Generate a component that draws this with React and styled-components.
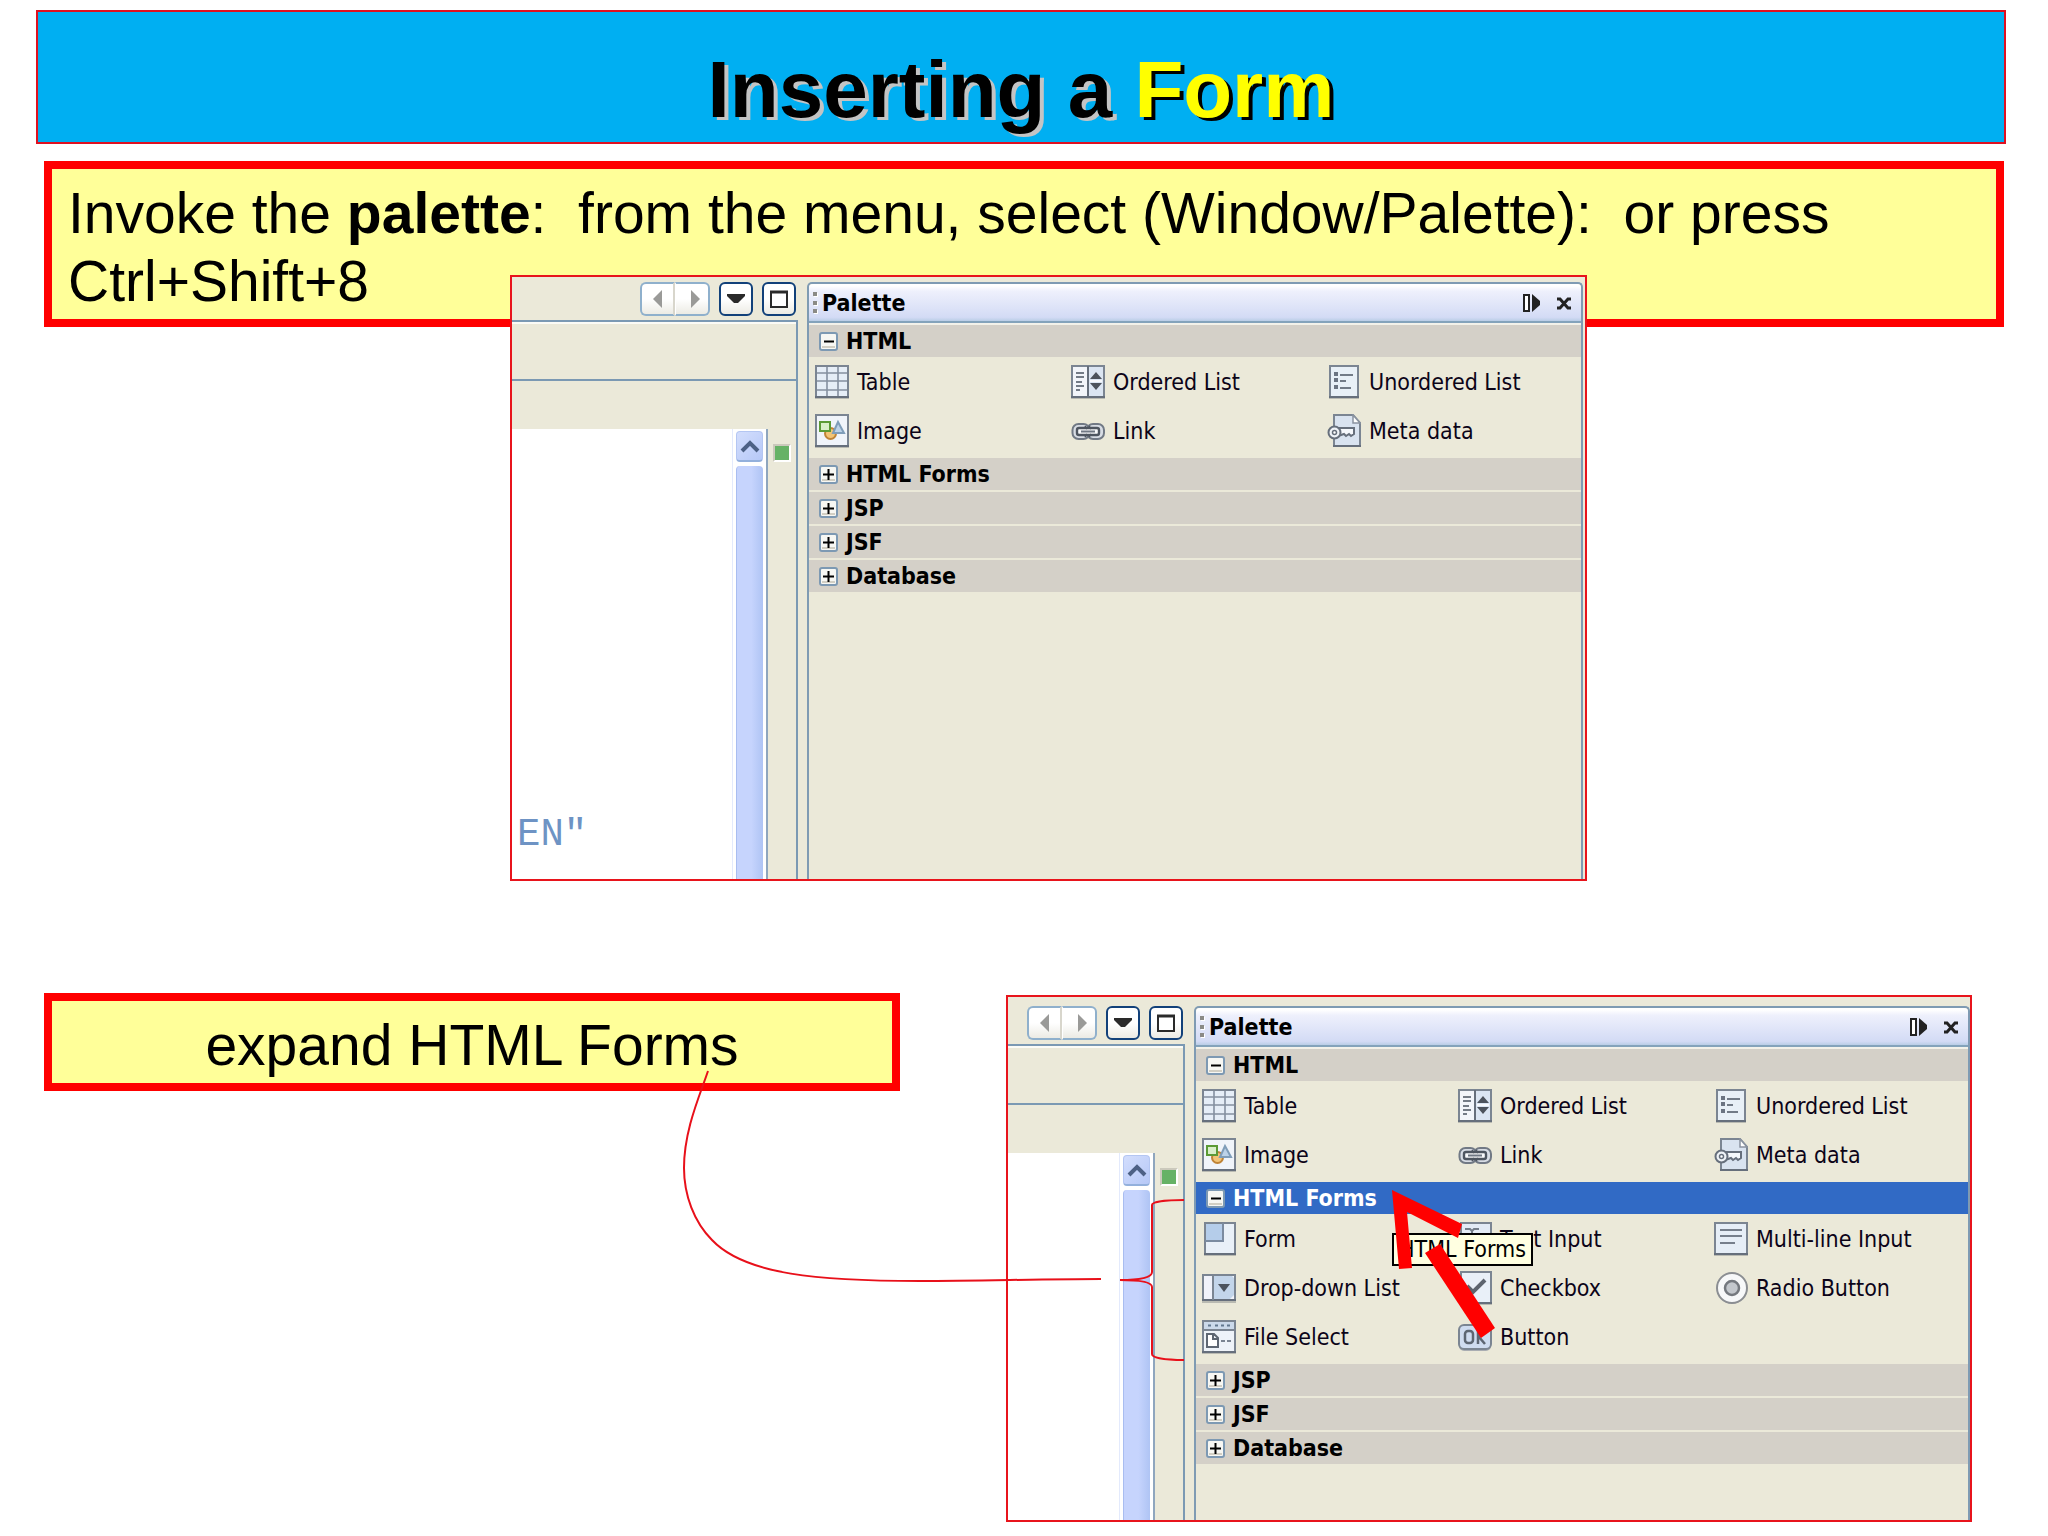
import React from "react";
import styled, { createGlobalStyle, css } from "styled-components";

const Global = createGlobalStyle`
  * { box-sizing: border-box; }
  body { margin: 0; background: #fff; color: #000; font-family: "Liberation Sans", Arial, sans-serif; }
  button { margin: 0; padding: 0; border: 0; background: none; color: inherit; font: inherit; text-align: left; }
  h1, h2, p { margin: 0; }
`;

const uiFont = css`
  font-family: "DejaVu Sans Condensed", Tahoma, "DejaVu Sans", sans-serif;
  font-size: 23px;
  line-height: 28px;
`;

const Slide = styled.main`
  min-height: 100vh;
  padding: 10px 0 14px;
  overflow: hidden;
`;

const Banner = styled.header`
  margin: 0 42px 0 36px;
  padding: 32px 16px 6px;
  border: 2px solid #e01020;
  background: #00aff2;
  text-align: center;
`;

const Title = styled.h1`
  font-size: 80px;
  line-height: 92px;
  font-weight: bold;
  text-shadow: 4px 3px 0 #c4c4c4;
`;

const TitleAccent = styled.span`
  color: #ffff00;
  text-shadow: 4px 3px 0 #000;
`;

const Note = styled.p`
  width: ${(p) => p.$width || "auto"};
  padding: 10px 16px 4px;
  border: 8px solid #ff0000;
  background: #ffff99;
  font-size: 57px;
  line-height: 68px;
  text-align: ${(p) => p.$align || "left"};
  white-space: pre-wrap;
`;

const Intro = styled.section`
  margin: 17px 44px 0;
`;

const FirstFigure = styled.section`
  display: flex;
  justify-content: center;
  margin-top: -52px;
  padding-left: 49px;
`;

const SecondStep = styled.section`
  display: flex;
  justify-content: space-between;
  align-items: flex-start;
  margin-top: 112px;
  padding: 0 76px 0 44px;
`;

const Shot = styled.figure`
  position: relative;
  display: flex;
  gap: 9px;
  flex: none;
  width: ${(p) => p.$width};
  height: ${(p) => p.$height};
  margin: ${(p) => p.$margin || "0"};
  padding: ${(p) => p.$padding};
  border: 2px solid #e8141c;
  background: #ebe9d9;
  ${uiFont}
`;

const Editor = styled.div`
  flex: 1;
  min-width: 0;
  display: flex;
  flex-direction: column;
`;

const Toolbar = styled.div`
  display: flex;
  justify-content: flex-end;
  gap: 9px;
  padding: 0 2px 4px 0;
`;

const ToolButton = styled.button`
  display: flex;
  align-items: center;
  justify-content: center;
  width: 34px;
  height: 34px;
  border: 2px solid ${(p) => (p.$dim ? "#8fb0cc" : "#12417a")};
  border-radius: 6px;
  background: linear-gradient(#fff 50%, #ecebe4);
`;

const NavPair = styled.div`
  display: flex;
  ${ToolButton} {
    width: 35px;
  }
  ${ToolButton}:first-child {
    border-right: 2px solid #d8d6cc;
    border-radius: 6px 0 0 6px;
  }
  ${ToolButton}:last-child {
    padding-left: 6px;
    border-left: 1px solid #fff;
    border-radius: 0 6px 6px 0;
  }
`;

const EditorFrame = styled.div`
  flex: 1;
  display: flex;
  flex-direction: column;
  border-top: 2px solid #7b99b3;
  border-right: 2px solid #7b99b3;
`;

const TabStrip = styled.div`
  height: 59px;
  border-top: 2px solid #fbfbf6;
  border-bottom: 2px solid #7b99b3;
`;

const EditorBody = styled.div`
  flex: 1;
  display: flex;
  margin-top: 48px;
`;

const Code = styled.code`
  flex: 1;
  display: flex;
  align-items: flex-end;
  padding: 0 5px 22px;
  background: #fff;
  color: #6e93c4;
  font-family: "Liberation Mono", "Courier New", monospace;
  font-size: 39px;
  line-height: 44px;
`;

const ScrollBar = styled.div`
  display: flex;
  flex-direction: column;
  gap: 4px;
  width: 36px;
  padding: 2px 3px 0;
  border-left: 1px solid #e3eafc;
  border-right: 2px solid #8fa6be;
  background: #fff;
`;

const ScrollUp = styled.button`
  display: flex;
  align-items: center;
  justify-content: center;
  height: 31px;
  border: 1px solid #b4c6f2;
  border-bottom: 2px solid #93b0dc;
  border-radius: 4px;
  background: linear-gradient(135deg, #d3defd, #b6c8f7);
`;

const Thumb = styled.div`
  flex: 1;
  border-left: 1px solid #a9bdf0;
  border-radius: 4px 4px 0 0;
  background: linear-gradient(90deg, #c6d4fd 55%, #afc4f4);
`;

const Gutter = styled.div`
  width: 28px;
  padding: 15px 5px;
`;

const StatusMark = styled.div`
  width: 18px;
  height: 18px;
  border: 2px solid #fff;
  border-top-color: #cbc9bc;
  border-left-color: #cbc9bc;
  background: #66b266;
`;

const Palette = styled.aside`
  width: 776px;
  border: solid #7f9bb3;
  border-width: 2px 2px 0;
  border-radius: 5px 5px 0 0;
`;

const PaletteHeader = styled.div`
  display: flex;
  align-items: center;
  gap: 4px;
  height: 39px;
  padding: 0 4px 0 3px;
  border-bottom: 2px solid #84a3bb;
  border-radius: 4px 4px 0 0;
  background: linear-gradient(#fff 5%, #eef0fc 20%, #d3dbf5 90%, #b9cde6);
`;

const PaletteTitle = styled.h2`
  flex: 1;
  font-size: 23px;
  line-height: 28px;
`;

const HeaderButton = styled.button`
  display: flex;
  padding: 0 6px;
`;

const Sections = styled.div`
  display: flex;
  flex-direction: column;
  gap: 2px;
  padding-top: 2px;
  background: linear-gradient(#f4f3ec, #ebe9d9 8px);
`;

const SectionHead = styled.button`
  display: flex;
  align-items: center;
  gap: 8px;
  width: 100%;
  height: 32px;
  padding-left: 10px;
  background: ${(p) => (p.$selected ? "#316ac5" : "#d4d0c8")};
  color: ${(p) => (p.$selected ? "#fff" : "#000")};
  font-weight: bold;
`;

const Items = styled.div`
  display: grid;
  grid-template-columns: repeat(3, 256px);
  grid-auto-rows: 49px;
  padding: 0 0 1px 6px;
`;

const Item = styled.button`
  display: flex;
  align-items: center;
  gap: 8px;
  color: #0c0418;
  white-space: nowrap;
`;

const Tooltip = styled.div`
  position: absolute;
  left: 384px;
  top: 236px;
  padding: 0 5px 1px;
  border: 2px solid #000;
  background: #ffffe1;
  white-space: nowrap;
`;

const Marks = styled.svg`
  position: absolute;
  left: -328px;
  top: 0;
  width: 1290px;
  height: 524px;
  pointer-events: none;
`;

const ink = "#666f7c";

function Page({ x = 1, y = 1, w = 32, h = 31, fill = "#e6eef7" }) {
  return (
    <>
      <rect x={x} y={y + 2} width={w} height={h} fill="none" stroke="#b9bab2" strokeWidth="2" />
      <rect x={x} y={y} width={w} height={h} fill={fill} stroke="#7b8592" strokeWidth="2" />
      <path d={`M${x - 1} ${y + h}h${w + 2}`} stroke={ink} strokeWidth="2" />
    </>
  );
}

const glyphs = {
  table: (
    <>
      <Page />
      <path d="M12 2v29M23 2v29M2 8h30M2 16h30M2 25h30" stroke="#8590a0" strokeWidth="1.6" />
    </>
  ),
  ordered: (
    <>
      <Page fill="#dbe5f2" />
      <rect x="2" y="2" width="14" height="29" fill="#f2f5fa" />
      <path d="M17 1v31" stroke={ink} strokeWidth="2" />
      <path d="M5 8h8M5 12h8M5 17h6M5 21h8M5 25h4" stroke="#737b86" strokeWidth="2" />
      <path d="M19 14L25 7l6 7zM19 18h12l-6 7z" fill="#4d535c" />
      <path d="M19 16h12" stroke="#f7f9fc" strokeWidth="2" />
    </>
  ),
  unordered: (
    <>
      <Page x={3} w={28} fill="#e8f0f7" />
      <path d="M7 9h4M7 15h4M7 22h4" stroke="#6b7482" strokeWidth="4" />
      <path d="M13 10h13M13 16h6M13 23h11" stroke="#727b87" strokeWidth="2" />
    </>
  ),
  image: (
    <>
      <Page fill="#f0f4fa" />
      <circle cx="15.500" cy="19.500" r="5.500" fill="#f2c476" stroke="#bf8336" strokeWidth="2" />
      <rect x="5" y="8" width="10" height="9" fill="#d9efc9" stroke="#5b9a36" strokeWidth="2" />
      <path d="M23 8l6 11H18z" fill="#bcd2e8" stroke="#7f9db9" strokeWidth="2" />
    </>
  ),
  link: (
    <>
      <rect x="1.500" y="10" width="17" height="15" rx="6" fill="#d8dde5" stroke="#717985" strokeWidth="2" />
      <rect x="16" y="10" width="17" height="15" rx="6" fill="#d8dde5" stroke="#717985" strokeWidth="2" />
      <rect x="6" y="14" width="22" height="7" rx="2" fill="#f7f8fa" stroke="#4e5560" strokeWidth="2.400" />
      <path d="M10 17.500h14" stroke="#6f7783" strokeWidth="2" />
      <path d="M14 12l2 3M18 12l2 3M14 23l2-3M18 23l2-3" stroke="#4e5560" strokeWidth="1.500" />
    </>
  ),
  meta: (
    <>
      <path d="M7 1h19l7 8v23H7z" fill="#d9e3f0" stroke="#7b8592" strokeWidth="2" />
      <path d="M6 32h28" stroke={ink} strokeWidth="2" />
      <path d="M26 1v8h7z" fill="#fff" stroke="#8a93a0" strokeWidth="1.500" />
      <path d="M11 14h16v6l-3 2-2-2-3 2-2-2-6 2z" fill="#f5f8fc" stroke={ink} strokeWidth="2" />
      <circle cx="7.500" cy="18.500" r="6" fill="#eef2f7" stroke={ink} strokeWidth="2" />
      <circle cx="7.500" cy="18.500" r="2" fill="#fff" stroke={ink} strokeWidth="1.500" />
    </>
  ),
  form: (
    <>
      <Page x={3} w={30} fill="#e9f0f8" />
      <path d="M4 2h16v16H4z" fill="#b5cdea" />
      <path d="M21 1v18H3" fill="none" stroke="#7b8ba0" strokeWidth="2" />
    </>
  ),
  textInput: (
    <>
      <Page x={3} w={30} fill="#e3ebf6" />
      <path d="M7 7h5l2 2 2-2h5M14 8v16" fill="none" stroke="#747d8a" strokeWidth="2" />
    </>
  ),
  multiline: (
    <>
      <Page />
      <path d="M6 8h22M6 14h22M6 21h15" stroke="#767f8c" strokeWidth="2" />
    </>
  ),
  dropdown: (
    <>
      <Page y={4} h={25} fill="#f0f2fa" />
      <path d="M12 5h18l2 2v17l-4 4H12z" fill="#c3d5ea" />
      <path d="M11 4v25" stroke="#7b8592" strokeWidth="2" />
      <path d="M16 13h12l-6 8z" fill="#4c535d" />
    </>
  ),
  checkbox: (
    <>
      <Page x={3} w={30} fill="#e9f0f8" />
      <path d="M9 15l6 6L27 9" fill="none" stroke="#5d646e" strokeWidth="4" />
    </>
  ),
  radio: (
    <>
      <circle cx="18" cy="18" r="15" fill="#c2c3c0" />
      <circle cx="18" cy="17" r="15" fill="#f7f8f9" stroke="#8b8e92" strokeWidth="2" />
      <circle cx="18" cy="17" r="7" fill="#c3c7cc" stroke="#74787e" strokeWidth="2.500" />
    </>
  ),
  file: (
    <>
      <Page fill="#eef3f9" />
      <path d="M2 2h30v8H2z" fill="#cbd9ea" />
      <path d="M1 10h32" stroke="#7b8592" strokeWidth="2" />
      <path d="M6 5.500h3M13 5.500h3M19 5.500h3M25 5.500h3" stroke="#62788f" strokeWidth="2" />
      <path d="M5 14h7l4 4v9H5zM11 14v5h5" fill="#fff" stroke="#5e6773" strokeWidth="2" />
      <path d="M19 21h4M25 21h4" stroke="#7b8592" strokeWidth="2" />
    </>
  ),
  button: (
    <>
      <rect x="1" y="7" width="32" height="24" rx="5" fill="#a9adb2" />
      <rect x="1" y="5" width="32" height="24" rx="5" fill="#cfdcf0" stroke="#7b8592" strokeWidth="2" />
      <rect x="7" y="11" width="8" height="12" rx="3" fill="none" stroke="#5d6673" strokeWidth="2.500" />
      <path d="M20 10v14M27 10l-6 7 6 7" fill="none" stroke="#5d6673" strokeWidth="2.500" />
    </>
  ),
};

function Icon({ name }) {
  return (
    <svg width="34" height="34" viewBox="0 0 34 34" aria-hidden="true">
      {glyphs[name]}
    </svg>
  );
}

function Toggle({ open }) {
  return (
    <svg width="19" height="19" viewBox="0 0 19 19" aria-hidden="true">
      <rect x="1" y="1" width="17" height="17" rx="2" fill="#f7f7f3" stroke="#7d99b3" strokeWidth="2" />
      <path d="M3 15h13" stroke="#d2cfc4" strokeWidth="2" />
      <path d={open ? "M5 9.500h10" : "M4 9.500h11M9.500 4v11"} stroke="#000" strokeWidth="2" />
    </svg>
  );
}

function Grip() {
  return (
    <svg width="6" height="24" viewBox="0 0 6 24" aria-hidden="true">
      {[1, 10, 18].map((y) => (
        <g key={y}>
          <rect x="2" y={y + 1} width="4" height="4" fill="#fff" />
          <rect x="1" y={y} width="4" height="4" fill="#8a8a86" />
        </g>
      ))}
    </svg>
  );
}

const htmlItems = [
  ["table", "Table"],
  ["ordered", "Ordered List"],
  ["unordered", "Unordered List"],
  ["image", "Image"],
  ["link", "Link"],
  ["meta", "Meta data"],
];

const formItems = [
  ["form", "Form"],
  ["textInput", "Text Input"],
  ["multiline", "Multi-line Input"],
  ["dropdown", "Drop-down List"],
  ["checkbox", "Checkbox"],
  ["radio", "Radio Button"],
  ["file", "File Select"],
  ["button", "Button"],
];

function Section({ title, items, selected }) {
  return (
    <div>
      <SectionHead type="button" $selected={selected} aria-expanded={Boolean(items)}>
        <Toggle open={Boolean(items)} />
        {title}
      </SectionHead>
      {items && (
        <Items>
          {items.map(([icon, label]) => (
            <Item type="button" key={label}>
              <Icon name={icon} />
              {label}
            </Item>
          ))}
        </Items>
      )}
    </div>
  );
}

function EditorPane({ code }) {
  return (
    <Editor>
      <Toolbar>
        <NavPair>
          <ToolButton type="button" $dim aria-label="Back">
            <svg width="12" height="18" viewBox="0 0 12 18">
              <path d="M10 0v18L1 9z" fill="#9a9a98" />
            </svg>
          </ToolButton>
          <ToolButton type="button" $dim aria-label="Forward">
            <svg width="12" height="18" viewBox="0 0 12 18">
              <path d="M2 0v18l9-9z" fill="#9a9a98" />
            </svg>
          </ToolButton>
        </NavPair>
        <ToolButton type="button" aria-label="Open documents">
          <svg width="18" height="10" viewBox="0 0 18 10">
            <path d="M0 0h18v2l-7 7H7L0 2z" fill="#2a2a2a" />
          </svg>
        </ToolButton>
        <ToolButton type="button" aria-label="Maximize">
          <svg width="18" height="18" viewBox="0 0 18 18">
            <path d="M1 2h16v15H1z" fill="#fff" stroke="#2a2a2a" strokeWidth="2" />
            <path d="M0 2h18" stroke="#2a2a2a" strokeWidth="3" />
          </svg>
        </ToolButton>
      </Toolbar>
      <EditorFrame>
        <TabStrip />
        <EditorBody>
          <Code>{code}</Code>
          <ScrollBar>
            <ScrollUp type="button" aria-label="Scroll up">
              <svg width="20" height="14" viewBox="0 0 20 14">
                <path d="M2 12l8-8 8 8" fill="none" stroke="#4d6185" strokeWidth="4" />
              </svg>
            </ScrollUp>
            <Thumb />
          </ScrollBar>
          <Gutter>
            <StatusMark />
          </Gutter>
        </EditorBody>
      </EditorFrame>
    </Editor>
  );
}

function PalettePane({ expandForms }) {
  return (
    <Palette>
      <PaletteHeader>
        <Grip />
        <PaletteTitle>Palette</PaletteTitle>
        <HeaderButton type="button" aria-label="Minimize">
          <svg width="18" height="18" viewBox="0 0 18 18">
            <path d="M1 1h5v16H1z" fill="#fff" stroke="#222" strokeWidth="2" />
            <path d="M9 0l8 7v4l-8 7z" fill="#222" />
          </svg>
        </HeaderButton>
        <HeaderButton type="button" aria-label="Close">
          <svg width="14" height="14" viewBox="0 0 14 14">
            <path d="M0 3h3l8 9h3M14 3h-3l-8 9H0" fill="none" stroke="#222" strokeWidth="3" />
          </svg>
        </HeaderButton>
      </PaletteHeader>
      <Sections>
        <Section title="HTML" items={htmlItems} />
        <Section title="HTML Forms" items={expandForms ? formItems : null} selected={expandForms} />
        <Section title="JSP" />
        <Section title="JSF" />
        <Section title="Database" />
      </Sections>
    </Palette>
  );
}

export default function App() {
  return (
    <Slide>
      <Global />
      <Banner>
        <Title>
          Inserting a <TitleAccent>Form</TitleAccent>
        </Title>
      </Banner>
      <Intro>
        <Note>
          Invoke the <b>palette</b>
          {":  from the menu, select (Window/Palette):  or press Ctrl+Shift+8"}
        </Note>
      </Intro>
      <FirstFigure>
        <Shot $width="1077px" $height="606px" $padding="5px 2px 0 0">
          <EditorPane code={'EN"'} />
          <PalettePane />
        </Shot>
      </FirstFigure>
      <SecondStep>
        <Note $width="856px" $align="center">
          expand HTML Forms
        </Note>
        <Shot $width="966px" $height="527px" $margin="2px 0 0" $padding="9px 0 0">
          <EditorPane />
          <PalettePane expandForms />
          <Tooltip role="tooltip">HTML Forms</Tooltip>
          <Marks viewBox="680 997 1290 524" aria-hidden="true">
            <g fill="none" stroke="#e8101a" strokeWidth="2">
              <path d="M708 1071C700 1095 684 1130 684 1168C684 1195 694 1222 712 1240C745 1275 820 1281 920 1281C980 1281 1040 1279 1101 1279" />
              <path d="M1184 1200C1165 1200 1152 1202 1152 1205V1272C1152 1278 1138 1280 1120 1280C1138 1280 1152 1282 1152 1287V1354C1152 1358 1165 1360 1184 1360" />
            </g>
            <g fill="#ff0000">
              <path d="M1392 1190L1462 1224L1458 1238L1407 1212L1412 1268L1399 1269Z" />
              <path d="M1440 1244L1495 1328L1481 1338L1425 1253Z" />
            </g>
          </Marks>
        </Shot>
      </SecondStep>
    </Slide>
  );
}
